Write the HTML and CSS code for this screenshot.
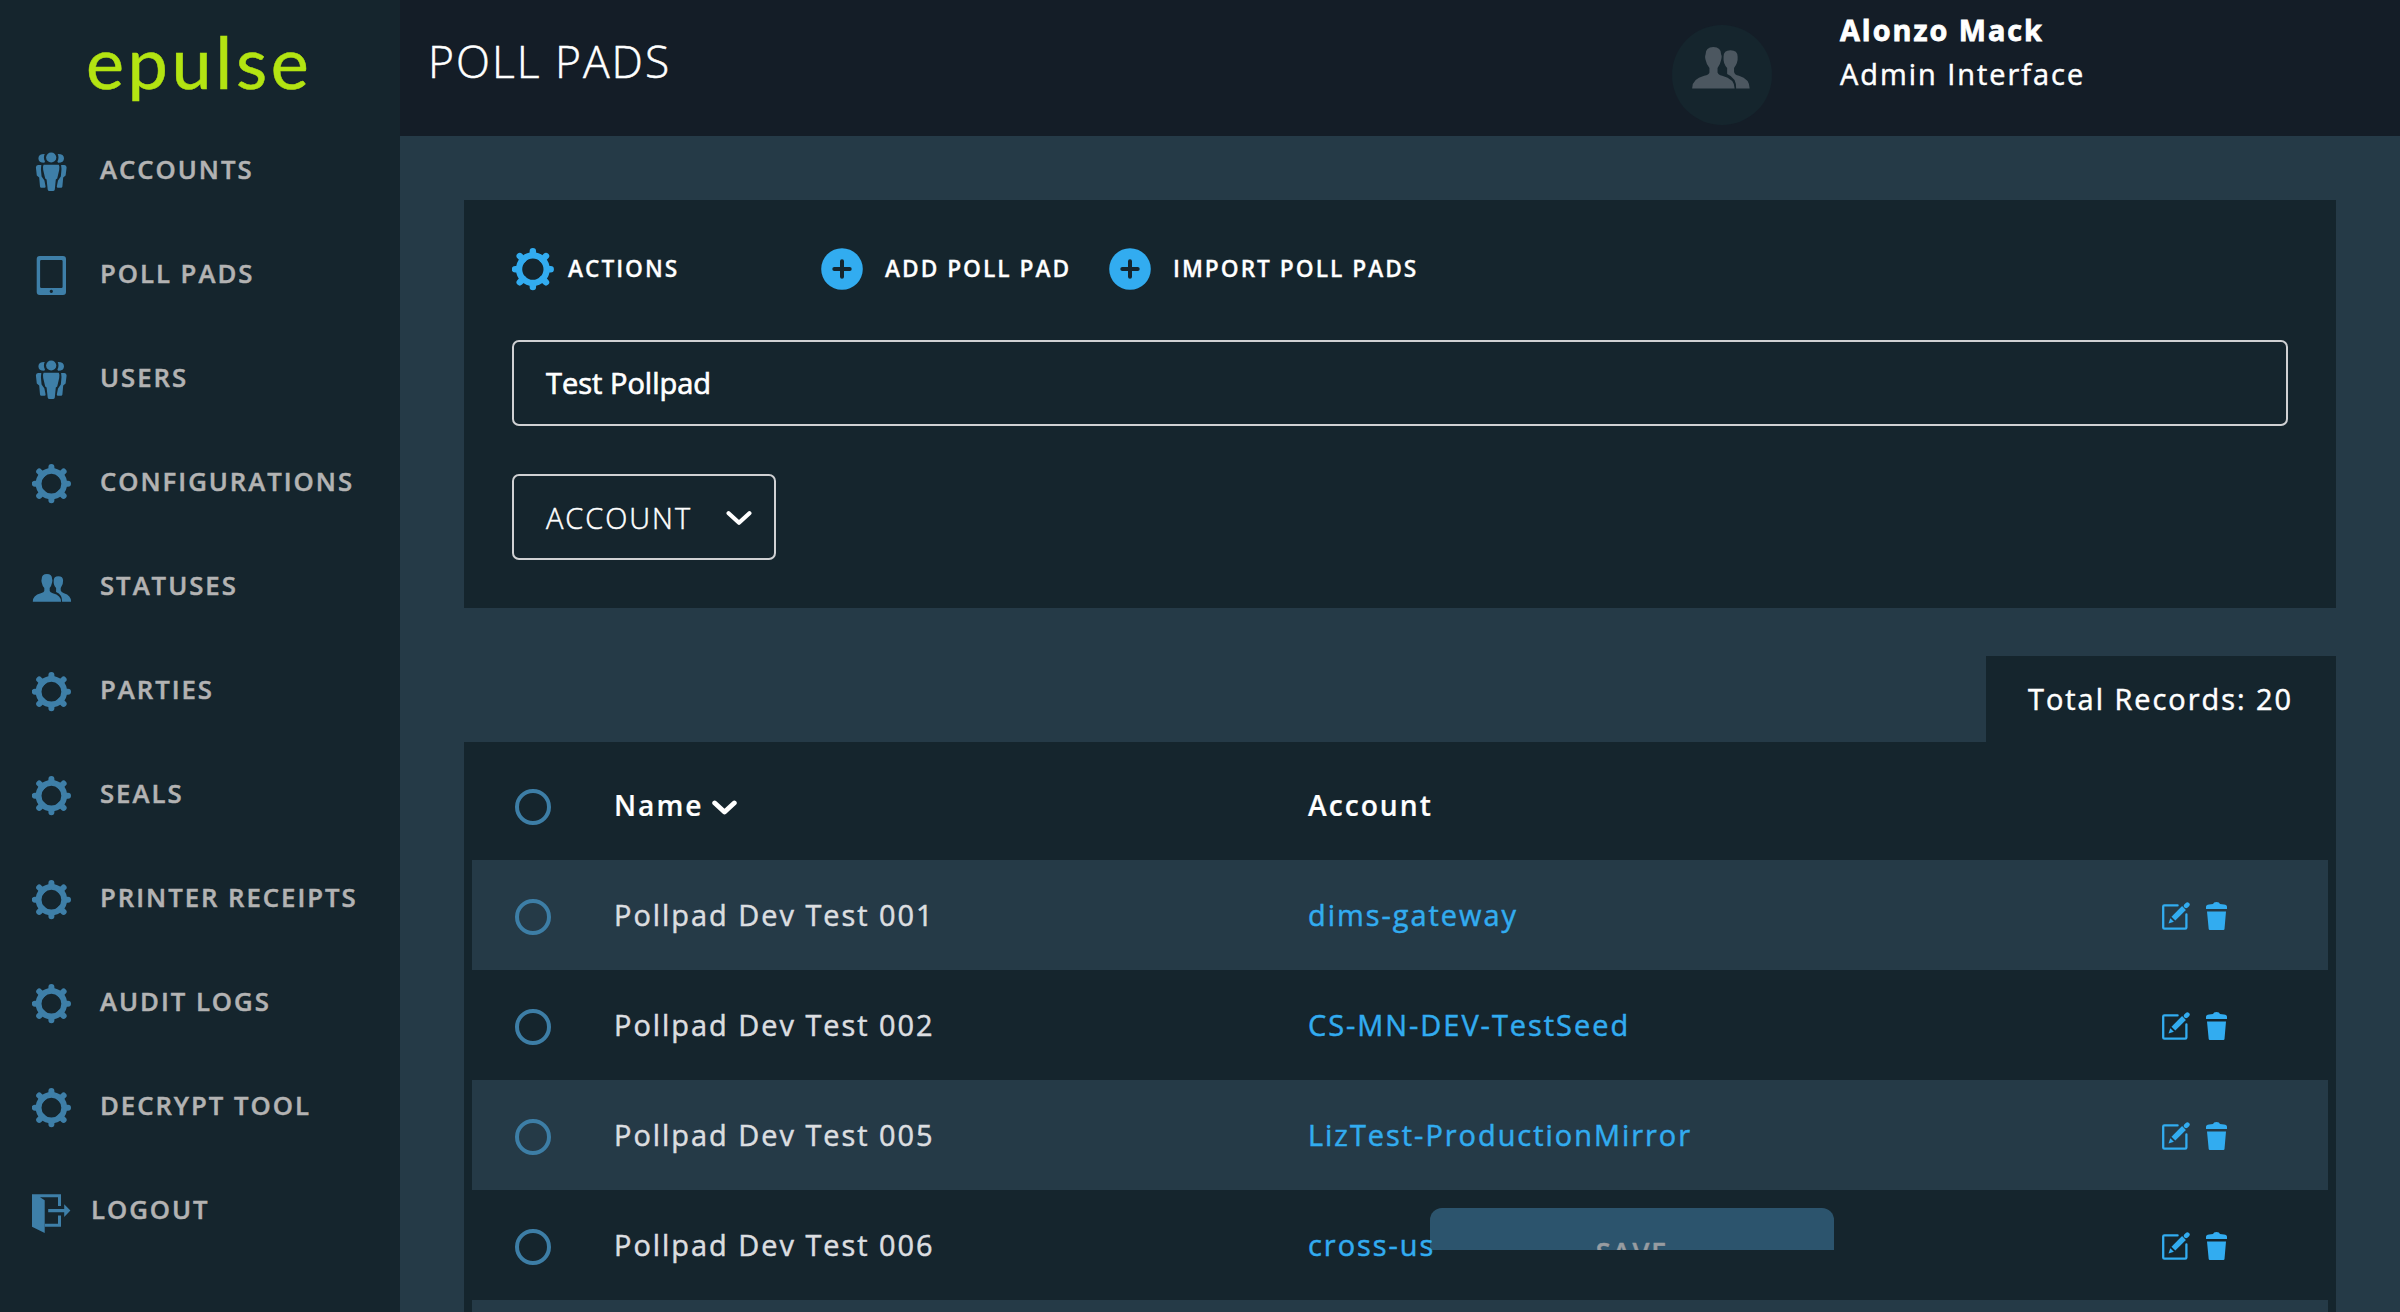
FILE: index.html
```
<!DOCTYPE html>
<html lang="en">
<head>
<meta charset="utf-8">
<title>Poll Pads</title>
<link rel="stylesheet" href="styles.css">
</head>
<body>
<svg class="sprite" aria-hidden="true">
  <symbol id="gear" viewBox="0 0 40 40">
    <g transform="translate(19.4 19.7)" fill="none" stroke="currentColor">
      <circle r="12.8" stroke-width="5.8"/>
      <path d="M0-14V-16.6M0 14V16.6M-14 0H-16.6M14 0H16.6" stroke-width="6" stroke-linecap="round"/>
      <path d="M9 9L12.2 12.2M-9 9L-12.2 12.2M9-9L12.2-12.2M-9-9L-12.2-12.2" stroke-width="6" stroke-linecap="round"/>
    </g>
  </symbol>
  <symbol id="group" viewBox="0 0 40 40">
    <g fill="currentColor">
      <circle cx="19.2" cy="5.5" r="5.1"/>
      <path d="M12.7 1.9Q11 5.5 13 9.5L12.3 10.8Q6.4 10.8 6.4 6.3T12.7 1.9Z"/>
      <path d="M25.7 1.9Q27.4 5.5 25.4 9.5L26.1 10.8Q32 10.8 32 6.3T25.7 1.9Z"/>
      <path d="M11.6 12.7H26.8Q27.8 14 27.2 18L25.2 26.5L23.8 27.5L22.8 37.5Q22.5 39 21 39H17.4Q16 39 15.7 37.5L14.6 27.5L13.2 26.5L11.2 18Q10.6 14 11.6 12.7Z"/>
      <path d="M9.3 12.9Q8.6 17 9.2 20.5L9.6 24.5L12.4 28.5L13.6 34.5Q13.6 35.8 12.5 35.8H9.3Q8.2 35.8 8 34.5L7.2 25.6L4.8 23.5L3.9 15.5Q3.9 13.2 6 12.9Z"/>
      <path d="M29.1 12.9Q29.8 17 29.2 20.5L28.8 24.5L26 28.5L24.8 34.5Q24.8 35.8 25.9 35.8H29.1Q30.2 35.8 30.4 34.5L31.2 25.6L33.6 23.5L34.6 15.5Q34.6 13.2 32.4 12.9Z"/>
    </g>
  </symbol>
  <symbol id="tablet" viewBox="0 0 40 40">
    <path fill="currentColor" fill-rule="evenodd" d="M7.7 0H31a3 3 0 0 1 3 3V36a3 3 0 0 1-3 3H7.7a3 3 0 0 1-3-3V3a3 3 0 0 1 3-3ZM9.3 4Q8.1 4 8.1 5.2V30.8Q8.1 32 9.3 32H29.4Q30.6 32 30.6 30.8V5.2Q30.6 4 29.4 4ZM19.3 33.8a1.6 1.6 0 1 0 .01 0Z"/>
  </symbol>
  <symbol id="people" viewBox="0 6 38.4 28">
    <g fill="currentColor">
      <path d="M8.9 11Q8.9 6 14.1 6Q19.3 6 19.3 11Q20 12 19.3 14.5Q18.6 18 16.9 20V23Q17.3 24.6 20 25.2Q28.3 27.3 28.3 33.7H0Q-.2 27.3 8 25.2Q11.3 24.6 11.5 23V20Q9.6 18 8.9 14.5Q8.3 12.5 8.9 11Z"/>
      <path d="M20.9 12.5Q20.9 8.2 25.5 8.2Q30.3 8.2 30.3 12.5Q30.6 16.5 27.9 20V22.6Q28.3 24.5 31.2 25.2Q38.3 27.3 38.3 33.7H29.3Q29.6 26.6 23.3 24V20Q20.5 17 20.9 12.5Z"/>
    </g>
  </symbol>
  <symbol id="door" viewBox="0 0 40 40">
    <g fill="currentColor">
      <path d="M0 .2H29V12H26V3.2H8L12.7 6.3V39L0 32.8Z"/>
      <path d="M12.7 29.7H26V21.4H29V32.8H12.7ZM16.2 15H32.2V10.2L38.4 16.5L32.2 23V18.2H16.2Z"/>
    </g>
  </symbol>
  <symbol id="plus" viewBox="0 0 42 42">
    <circle cx="21" cy="21" r="20.8" fill="currentColor"/>
    <path d="M13.3 21H28.7M21 13.3V28.7" stroke="#15252d" stroke-width="4" stroke-linecap="round"/>
  </symbol>
  <symbol id="chevron" viewBox="0 0 26 16">
    <path d="M2.6 3.2L13 12.8L23.4 3.2" fill="none" stroke="currentColor" stroke-linecap="round" stroke-linejoin="round"/>
  </symbol>
  <symbol id="edit" viewBox="0 0 28 28">
    <path d="M15.6 3.4H2.4Q1.2 3.4 1.2 4.6V25.4Q1.2 26.6 2.4 26.6H23.2Q24.4 26.6 24.4 25.4V12.4" fill="none" stroke="currentColor" stroke-width="2.3" stroke-linecap="round"/>
    <path d="M6.5 21.4L8.3 16.2L11.9 19.8Z" fill="currentColor"/>
    <path d="M11.4 16.6L22 6" fill="none" stroke="currentColor" stroke-width="5.4"/>
    <path d="M24.1 3.9L25.4 2.6" fill="none" stroke="currentColor" stroke-width="4.6" stroke-linecap="round"/>
  </symbol>
  <symbol id="trash" viewBox="0 0 21 28">
    <path fill="currentColor" d="M0 6.9V5Q0 2.7 3 2.4L7 2Q7.5 0 10.5 0T14 2L18 2.4Q21 2.7 21 5V6.9ZM1 9.4H20L18.5 27Q18.4 28 17.4 28H3.8Q2.8 28 2.7 27Z"/>
  </symbol>
</svg>

<div class="app">
  <aside class="sidebar">
    <div class="logo">epulse</div>
    <nav class="nav">
      <a class="nav-item"><svg class="nav-icon"><use href="#group"/></svg>ACCOUNTS</a>
      <a class="nav-item"><svg class="nav-icon"><use href="#tablet"/></svg>POLL PADS</a>
      <a class="nav-item"><svg class="nav-icon"><use href="#group"/></svg>USERS</a>
      <a class="nav-item"><svg class="nav-icon"><use href="#gear"/></svg>CONFIGURATIONS</a>
      <a class="nav-item"><svg class="nav-icon nav-icon-people"><use href="#people"/></svg>STATUSES</a>
      <a class="nav-item"><svg class="nav-icon"><use href="#gear"/></svg>PARTIES</a>
      <a class="nav-item"><svg class="nav-icon"><use href="#gear"/></svg>SEALS</a>
      <a class="nav-item"><svg class="nav-icon"><use href="#gear"/></svg>PRINTER RECEIPTS</a>
      <a class="nav-item"><svg class="nav-icon"><use href="#gear"/></svg>AUDIT LOGS</a>
      <a class="nav-item"><svg class="nav-icon"><use href="#gear"/></svg>DECRYPT TOOL</a>
      <a class="nav-item nav-logout"><svg class="nav-icon"><use href="#door"/></svg>LOGOUT</a>
    </nav>
  </aside>

  <div class="page">
    <header class="topbar">
      <h1 class="title">POLL PADS</h1>
      <div class="user">
        <div class="avatar"><svg class="avatar-icon"><use href="#people"/></svg></div>
        <div class="user-text"><strong class="user-name">Alonzo Mack</strong><span>Admin Interface</span></div>
      </div>
    </header>

    <main class="content">
      <section class="panel">
        <div class="actions">
          <div class="action action-menu"><svg class="action-gear"><use href="#gear"/></svg>ACTIONS</div>
          <div class="action action-add"><svg class="action-plus"><use href="#plus"/></svg>ADD POLL PAD</div>
          <div class="action"><svg class="action-plus"><use href="#plus"/></svg>IMPORT POLL PADS</div>
        </div>
        <div class="search">Test Pollpad</div>
        <div class="select">ACCOUNT<svg class="select-arrow"><use href="#chevron"/></svg></div>
      </section>

      <div class="total">Total Records: 20</div>

      <section class="table">
        <div class="row row-head"><span class="radio"></span><span class="name">Name<svg class="sort"><use href="#chevron"/></svg></span><span>Account</span></div>
        <div class="row"><span class="radio"></span><span>Pollpad Dev Test 001</span><a class="link">dims-gateway</a><span class="tools"><svg class="edit"><use href="#edit"/></svg><svg class="trash"><use href="#trash"/></svg></span></div>
        <div class="row"><span class="radio"></span><span>Pollpad Dev Test 002</span><a class="link">CS-MN-DEV-TestSeed</a><span class="tools"><svg class="edit"><use href="#edit"/></svg><svg class="trash"><use href="#trash"/></svg></span></div>
        <div class="row"><span class="radio"></span><span>Pollpad Dev Test 005</span><a class="link">LizTest-ProductionMirror</a><span class="tools"><svg class="edit"><use href="#edit"/></svg><svg class="trash"><use href="#trash"/></svg></span></div>
        <div class="row"><span class="radio"></span><span>Pollpad Dev Test 006</span><a class="link">cross-us</a><span class="tools"><svg class="edit"><use href="#edit"/></svg><svg class="trash"><use href="#trash"/></svg></span></div>
        <div class="row"></div>
      </section>
    </main>
  </div>
  <div class="save">SAVE</div>
</div>
</body>
</html>
```
FILE: styles.css
```
* { box-sizing: border-box; }

body {
  margin: 0;
  background: #253a47;
  color: #fff;
  font: 400 28.9px/44px "Open Sans", "Noto Sans", sans-serif;
  letter-spacing: 2px;
  -webkit-text-stroke: 0.5px;
}

svg { display: block; flex: none; overflow: visible; }
.sprite { position: absolute; width: 0; height: 0; }

.app { position: relative; display: flex; height: 1312px; overflow: hidden; }

/* Sidebar */
.sidebar { flex: none; width: 400px; background: #15252d; }
.logo {
  height: 118px;
  padding-left: 86px;
  color: #b3e412;
  font: 400 72px/122px Lato, sans-serif;
  letter-spacing: 3.6px;
}
.nav-item {
  display: flex;
  align-items: center;
  gap: 28px;
  height: 104px;
  padding-left: 32px;
  color: #b3b3b3;
  font-size: 25.7px;
  font-weight: 600;
}
.nav-icon { width: 40px; height: 40px; margin-top: 4px; color: #3e7fa8; }
.nav-icon-people { height: 28px; }
.nav-logout { gap: 19px; }
.nav-logout .nav-icon { margin-top: 8px; }

/* Header */
.page { flex: 1; min-width: 0; }
.topbar {
  display: flex;
  justify-content: space-between;
  height: 136px;
  padding-left: 28px;
  background: #141d27;
}
.title { margin: 0; font-size: 44.4px; font-weight: 300; line-height: 122px; }
.user { display: flex; gap: 68px; width: 728px; }
.avatar {
  flex: none;
  width: 100px;
  height: 100px;
  margin-top: 25px;
  padding: 22px 0 0 20px;
  border-radius: 50%;
  background: #15252d;
}
.avatar-icon { width: 58px; height: 42px; color: #4c5760; }
.user-text { display: flex; flex-direction: column; padding-top: 8px; }
.user-name { font-weight: 700; font-size: 28.8px; -webkit-text-stroke: 0.8px; }

/* Filters */
.content { padding: 64px 64px 0; }
.panel { height: 408px; padding: 48px 48px 0; background: #15252d; }
.actions { display: flex; height: 42px; }
.action { display: flex; align-items: center; gap: 22px; font-size: 22.7px; font-weight: 600; -webkit-text-stroke: 0.3px; }
.action-menu { width: 309px; gap: 13px; }
.action-add { width: 288px; }
.action-gear { width: 43px; height: 43px; }
.action-plus { width: 42px; height: 42px; }
.action-gear, .action-plus { color: #32acf0; }
.search, .select {
  height: 86px;
  padding-left: 32px;
  border: 2px solid #d0d1d3;
  border-radius: 7px;
  line-height: 82px;
}
.search { margin-top: 50px; font-size: 29px; letter-spacing: 0; -webkit-text-stroke: 0.7px; }
.select {
  display: flex;
  align-items: center;
  justify-content: space-between;
  width: 264px;
  margin-top: 48px;
  padding-right: 22px;
  padding-top: 2px;
  font-weight: 300;
}
.select-arrow { width: 26px; height: 16px; stroke-width: 4.2px; }

/* Records */
.total {
  width: 350px;
  height: 86px;
  margin: 48px 0 0 auto;
  padding-left: 42px;
  background: #15252d;
  line-height: 86px;
}
.table { padding: 0 8px; background: #15252d; }
.row {
  display: grid;
  grid-template-columns: 99px 694px 854px auto;
  align-items: center;
  height: 110px;
  padding-left: 43px;
  color: #dcdee0;
}
.row:nth-child(even) { background: #253a47; }
.row-head { height: 118px; padding-top: 8px; color: #fff; font-weight: 600; font-size: 28.2px; -webkit-text-stroke: 0.2px; }
.name { display: flex; align-items: center; gap: 8px; }
.sort { width: 25px; height: 15px; margin-top: 4px; stroke-width: 5.2px; }
.radio { width: 36px; height: 36px; margin-top: 3px; border: 4px solid #3d7ea6; border-radius: 50%; }
.link { position: relative; z-index: 2; color: #32acf0; }
.tools { display: flex; gap: 16px; margin-top: 2px; color: #32acf0; }
.edit { width: 28px; height: 28px; }
.trash { width: 21px; height: 28px; }

.save {
  position: absolute;
  left: 1430px;
  top: 1208px;
  z-index: 1;
  width: 404px;
  height: 42px;
  overflow: hidden;
  border-radius: 12px 12px 0 0;
  background: #2c546d;
  color: #979ca1;
  font-size: 27px;
  font-weight: 600;
  line-height: 87px;
  text-align: center;
}
```
